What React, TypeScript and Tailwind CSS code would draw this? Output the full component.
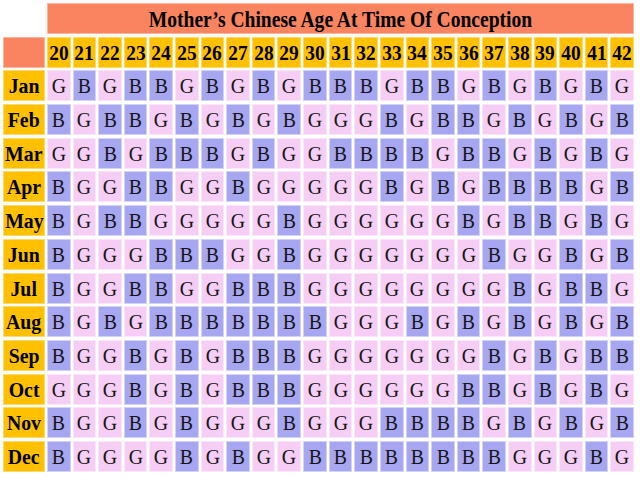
const AGES = Array.from({ length: 23 }, (_, i) => 20 + i);

// one string per month, one letter per age column (20..42)
const CHART: [string, string][] = [
  ['Jan', 'GBGBBGBGBGBBBGBBGBGBGBG'],
  ['Feb', 'BGBBGBGBGBGGGBGBBGBGBGB'],
  ['Mar', 'GGBGBBBGBGGBBBBGBBGBGBG'],
  ['Apr', 'BGGBBGGBGGGGGBGBGBBBBGB'],
  ['May', 'BGBBGGGGGBGGGGGGBGBBGBG'],
  ['Jun', 'BGGGBBBGGBGGGGGGGBGGBGB'],
  ['Jul', 'BGGBBGGBBBGGGGGGGGBGBBG'],
  ['Aug', 'BGBGBBBBBBBGGGBGBGBGBGB'],
  ['Sep', 'BGGBGBGBBBGGGGGGGBGBGBB'],
  ['Oct', 'GGGBGBGBBBGGGGGGBBGBGBG'],
  ['Nov', 'BGGBGBGGGBGGGBBBBGBGBGB'],
  ['Dec', 'BGGGGBGBGGBBBBBBBBGGGBG'],
];

const serif = "font-['Liberation_Serif','Times_New_Roman',serif]";

function Cell({ letter }: { letter: string }) {
  const boy = letter === 'B';
  return (
    <div
      className={`flex items-center justify-center border border-white/50 pt-[1px] text-[22px] text-[#151515] ${
        boy ? 'bg-[#a7a7f1]' : 'bg-[#f6cdf4]'
      }`}
    >
      <span className="inline-block scale-x-[0.9]">{letter}</span>
    </div>
  );
}

export default function App() {
  return (
    <div className={`h-[480px] w-[640px] overflow-hidden bg-white pl-[3px] pt-[3px] ${serif}`}>
      <div className="grid w-[631px] grid-cols-[42px_repeat(23,minmax(0,1fr))] auto-rows-[31px] gap-x-[2px] gap-y-[2.7px] leading-none">
        <div />
        <div className="col-span-23 flex items-center justify-center border border-white/40 bg-[#f9845f] pt-[1px] text-[23px] font-bold text-black">
          <span className="inline-block whitespace-nowrap scale-x-[0.85]">
            Mother’s Chinese Age At Time Of Conception
          </span>
        </div>

        <div className="border border-white/40 bg-[#f9845f]" />
        {AGES.map((age) => (
          <div
            key={age}
            className="flex items-center justify-center border border-white/40 bg-[#ffc000] pt-[1px] text-[22px] font-bold text-black"
          >
            <span className="inline-block scale-x-[0.88]">{age}</span>
          </div>
        ))}

        {CHART.map(([month, row]) => (
          <div key={month} className="contents">
            <div className="flex items-center justify-center border border-white/40 bg-[#ffc000] pt-[1px] text-[22px] font-bold text-black">
              <span className="inline-block scale-x-[0.9]">{month}</span>
            </div>
            {row.split('').map((letter, i) => (
              <Cell key={i} letter={letter} />
            ))}
          </div>
        ))}
      </div>
    </div>
  );
}
